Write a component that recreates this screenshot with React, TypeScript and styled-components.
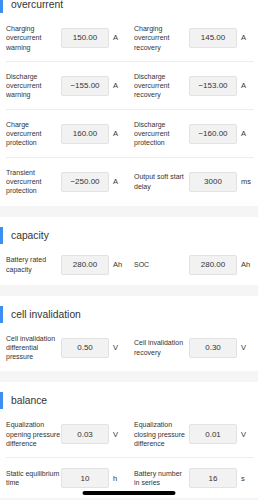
import React from "react";
import styled, { createGlobalStyle } from "styled-components";

const GlobalStyle = createGlobalStyle`
  html, body {
    margin: 0;
    padding: 0;
    background: #f5f5f5;
    font-family: "Liberation Sans", Arial, sans-serif;
    color: #333;
  }
  body { overflow: hidden; }
`;

const Page = styled.div`
  margin-top: -14px;
  display: flex;
  flex-direction: column;
  gap: 11px;
`;

const Section = styled.section`
  background: #fff;
`;

const Header = styled.div`
  display: flex;
  align-items: center;
  gap: 8px;
  padding: 10px 0 1px;
`;

const Bar = styled.div`
  width: 3px;
  height: 17px;
  background: #3d8ef3;
`;

const Title = styled.div`
  font-size: 10.3px;
  line-height: 17px;
  color: #333;
`;

const Row = styled.div<{ $last: boolean }>`
  margin: 0 4px 0 6px;
  padding: 10px 0;
  display: grid;
  grid-template-columns: 118px 1fr;
  column-gap: 10px;
  box-shadow: ${(p) => (p.$last ? "none" : "inset 0 -1px 0 #ededed")};
`;

const Cell = styled.div`
  display: flex;
  align-items: center;
  min-width: 0;
`;

const Label = styled.div`
  width: 55px;
  flex-shrink: 0;
  font-size: 7px;
  line-height: 9.3px;
  color: #333;
`;

const ValueBox = styled.input`
  width: 48px;
  height: 20px;
  flex-shrink: 0;
  box-sizing: border-box;
  margin: 0;
  padding: 0;
  border: 1px solid #e2e2e2;
  border-radius: 2px;
  background: #f2f2f2;
  font-family: "Liberation Sans", Arial, sans-serif;
  font-size: 8px;
  color: #333;
  text-align: center;
  outline: none;
`;

const Unit = styled.div`
  margin-left: 4px;
  font-size: 7.5px;
  color: #333;
  white-space: nowrap;
`;

const HomeIndicator = styled.div`
  position: fixed;
  left: 50%;
  bottom: 5.5px;
  transform: translateX(-50%);
  width: 93px;
  height: 3.5px;
  border-radius: 2px;
  background: #000;
`;

type Field = { label: string; value: string; unit: string };
type SectionData = { title: string; rows: Field[][] };

const data: SectionData[] = [
  {
    title: "overcurrent",
    rows: [
      [
        { label: "Charging overcurrent warning", value: "150.00", unit: "A" },
        { label: "Charging overcurrent recovery", value: "145.00", unit: "A" },
      ],
      [
        { label: "Discharge overcurrent warning", value: "\u2212155.00", unit: "A" },
        { label: "Discharge overcurrent recovery", value: "\u2212153.00", unit: "A" },
      ],
      [
        { label: "Charge overcurrent protection", value: "160.00", unit: "A" },
        { label: "Discharge overcurrent protection", value: "\u2212160.00", unit: "A" },
      ],
      [
        { label: "Transient overcurrent protection", value: "\u2212250.00", unit: "A" },
        { label: "Output soft start delay", value: "3000", unit: "ms" },
      ],
    ],
  },
  {
    title: "capacity",
    rows: [
      [
        { label: "Battery rated capacity", value: "280.00", unit: "Ah" },
        { label: "SOC", value: "280.00", unit: "Ah" },
      ],
    ],
  },
  {
    title: "cell invalidation",
    rows: [
      [
        { label: "Cell invalidation differential pressure", value: "0.50", unit: "V" },
        { label: "Cell invalidation recovery", value: "0.30", unit: "V" },
      ],
    ],
  },
  {
    title: "balance",
    rows: [
      [
        { label: "Equalization opening pressure difference", value: "0.03", unit: "V" },
        { label: "Equalization closing pressure difference", value: "0.01", unit: "V" },
      ],
      [
        { label: "Static equilibrium time", value: "10", unit: "h" },
        { label: "Battery number in series", value: "16", unit: "s" },
      ],
    ],
  },
];

export default function App() {
  return (
    <>
      <GlobalStyle />
      <Page>
        {data.map((s) => (
          <Section key={s.title}>
            <Header>
              <Bar />
              <Title>{s.title}</Title>
            </Header>
            {s.rows.map((r, i) => (
              <Row key={i} $last={i === s.rows.length - 1}>
                {r.map((f) => (
                  <Cell key={f.label}>
                    <Label>{f.label}</Label>
                    <ValueBox readOnly value={f.value} />
                    <Unit>{f.unit}</Unit>
                  </Cell>
                ))}
              </Row>
            ))}
          </Section>
        ))}
      </Page>
      <HomeIndicator />
    </>
  );
}
